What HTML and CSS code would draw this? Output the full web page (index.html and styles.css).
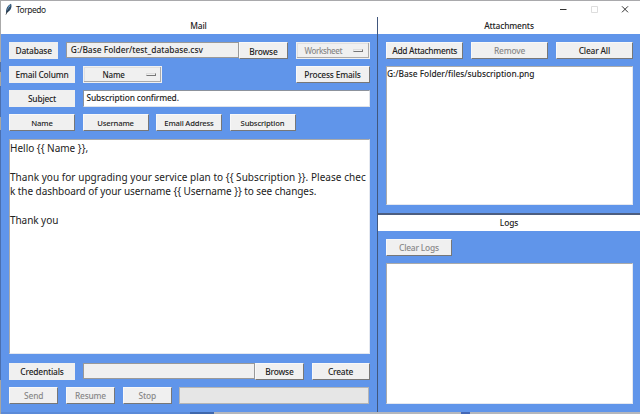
FILE: index.html
```html
<!DOCTYPE html>
<html lang="en">
  <head>
    <meta charset="UTF-8" />
    <meta name="viewport" content="width=device-width, initial-scale=1.0" />
    <title>Torpedo</title>
    <link rel="stylesheet" href="styles.css" />
  </head>
  <body>
    <div class="window">
      <header class="titlebar">
        <svg class="feather" viewBox="0 0 8 12">
          <path d="M1.3 10.6C.6 7.5 1.5 3 6 .8 7.2 3.4 6.3 7.4 2.4 9.2Z" fill="#2b4a68" />
          <path d="M2.2 8C2.3 5.2 3.4 3 5.6 1.4 5 4.2 4.1 6.2 2.2 8Z" fill="#6fa3cf" />
          <path d="M.9 11.6 2.6 8.2 4.6 4" fill="none" stroke="#222" stroke-width=".7" />
        </svg>
        <span class="title">Torpedo</span>
        <svg class="controls" viewBox="0 0 70 10">
          <path d="M0 5.5H6.5" stroke="#333" />
          <path d="M31.5 2.5H37.5V8.5H31.5Z" fill="none" stroke="#ddd" />
          <path d="M62 2.3 68 8.3M68 2.3 62 8.3" stroke="#333" />
        </svg>
      </header>

      <div class="panes">
        <section class="pane mail">
          <h2 class="heading">Mail</h2>
          <div class="content">
            <div class="row">
              <span class="label small">Database</span>
              <div class="picker">
                <div class="entry readonly">G:/Base Folder/test_database.csv</div>
                <button class="btn small browse">Browse</button>
              </div>
              <button class="btn menu worksheet" disabled>Worksheet<i class="notch"></i></button>
            </div>
            <div class="row">
              <span class="label">Email Column</span>
              <button class="btn menu column">Name<i class="notch"></i></button>
              <button class="btn process">Process Emails</button>
            </div>
            <div class="row">
              <span class="label">Subject</span>
              <div class="entry subject">Subscription confirmed.</div>
            </div>
            <div class="row fields">
              <button class="btn">Name</button>
              <button class="btn">Username</button>
              <button class="btn">Email Address</button>
              <button class="btn">Subscription</button>
            </div>
            <div class="message">Hello {{ Name }},

<span class="long">Thank you for upgrading your service plan to {{ Subscription }}. Please chec</span>
<span class="tight">k the dashboard of your username {{ Username }} to see changes.</span>

<span class="tight">Thank you</span></div>
            <div class="row credentials">
              <span class="label">Credentials</span>
              <div class="picker">
                <div class="entry readonly"></div>
                <button class="btn small">Browse</button>
              </div>
              <button class="btn create">Create</button>
            </div>
            <div class="row">
              <button class="btn small" disabled>Send</button>
              <button class="btn small" disabled>Resume</button>
              <button class="btn small" disabled>Stop</button>
              <div class="progress"></div>
            </div>
          </div>
        </section>

        <div class="side">
          <section class="pane attachments">
            <h2 class="heading">Attachments</h2>
            <div class="content">
              <div class="row">
                <button class="btn wide add">Add Attachments</button>
                <button class="btn wide" disabled>Remove</button>
                <button class="btn wide">Clear All</button>
              </div>
              <div class="list">G:/Base Folder/files/subscription.png</div>
            </div>
          </section>
          <section class="pane logs">
            <h2 class="heading">Logs</h2>
            <div class="content">
              <div class="row">
                <button class="btn" disabled>Clear Logs</button>
              </div>
              <div class="list"></div>
            </div>
          </section>
        </div>
      </div>
    </div>
    <div class="desktop"></div>
  </body>
</html>
```
FILE: styles.css
```css
* {
  box-sizing: border-box;
}

body {
  margin: 0;
  height: 414px;
  padding-left: 1px;
  overflow: hidden;
  background: linear-gradient(#aaa 0 62px, #5272a8 62px 72px, #a9a69f 72px 86px, #4b6fae 86px 117px, #a9a69f 117px 130px, #4b6fae 130px 380px, #a9a69f 380px);
  font-family: "Noto Sans", "Open Sans", sans-serif;
  font-size: 8.4px;
  font-weight: 500;
  color: #222;
}

.window {
  display: flex;
  flex-direction: column;
  height: 412px;
  border-top: 1px solid #a9a9ac;
  background: #fff;
}

.titlebar {
  display: flex;
  align-items: center;
  height: 16px;
  padding-left: 4px;
}

.feather {
  width: 8px;
  height: 12px;
}

.title {
  margin-left: 3px;
  font-size: 8.4px;
  font-weight: 400;
  letter-spacing: -0.45px;
}

.controls {
  width: 70px;
  height: 10px;
  margin: 0 10px 0 auto;
}

.panes {
  display: flex;
  flex: 1;
}

.mail {
  width: 376px;
}

.side {
  display: flex;
  flex: 1;
  flex-direction: column;
  border-left: 1px solid #41577d;
}

.pane {
  display: flex;
  flex-direction: column;
}

.heading {
  height: 17px;
  margin: 0;
  font-size: 8.4px;
  font-weight: 500;
  line-height: 18px;
  letter-spacing: -0.15px;
  text-align: center;
}

.mail .heading {
  padding-left: 19px;
}

.attachments {
  height: 196px;
}

.logs {
  flex: 1;
  border-top: 2px solid #4c5e80;
}

.logs .heading {
  height: 16px;
  line-height: 16px;
}

.content {
  display: flex;
  flex: 1;
  flex-direction: column;
  gap: 7.3px;
  padding: 7.5px 7px 8px 8px;
  background: #6095ea;
}

.mail .content {
  padding-right: 7.5px;
}

.row {
  display: flex;
  gap: 7.5px;
  height: 17px;
  flex: none;
}

.label,
.btn {
  display: flex;
  align-items: center;
  justify-content: center;
  width: 66px;
  margin: 0;
  padding: 0;
  border: 0;
  background: #f0f0f0;
  color: #222;
  font: inherit;
  letter-spacing: -0.18px;
  white-space: nowrap;
}

.btn {
  border: 1px solid;
  border-color: #f8f8f8 #777 #777 #f8f8f8;
}

.btn:disabled {
  color: #888;
}

.small {
  width: 49.3px;
}

.browse {
  padding-top: 2px;
}

/* option menus: raised box with a small bevelled bar */
.menu {
  justify-content: space-between;
  border-width: 1.5px;
  box-shadow: inset -1px -1px #aaa, inset 1px 1px #e0e0e0;
  outline: 1px solid #f0f0f0;
  outline-offset: -1px;
}

.notch {
  width: 10px;
  height: 3px;
  border: 1px solid;
  border-color: #ddd #777 #777 #ddd;
}

.worksheet {
  width: 74px;
  padding: 0 6px 0 8px;
  font-size: 8px;
  letter-spacing: -0.4px;
}

.column {
  width: 79px;
  padding: 0 5px 0 19px;
  font-size: 8px;
}

.process {
  width: 74px;
  margin-left: auto;
}

.picker {
  display: flex;
  flex: 1;
}

.entry {
  display: flex;
  flex: 1;
  align-items: center;
  padding-left: 4px;
  border: 1px solid;
  border-color: #8c929c #dfe3ea #dfe3ea #8c929c;
  background: #fff;
}

.subject {
  padding-left: 3px;
  padding-bottom: 2px;
  letter-spacing: -0.15px;
}

.readonly {
  height: 16px;
  border-color: #999;
  background: #f0f0f0;
}

.fields .btn {
  font-size: 7.7px;
}

.message,
.list {
  flex: 1;
  border: 1px solid;
  border-color: #aaa #e4e8f0 #e4e8f0 #aaa;
  background: #fff;
  white-space: pre;
}

.message {
  padding: 1px 0 0;
  font-size: 10px;
  font-weight: 400;
  line-height: 14.45px;
}

.message .long {
  letter-spacing: 0.04px;
}

.message .tight {
  letter-spacing: -0.06px;
}

.list {
  line-height: 14px;
  letter-spacing: -0.03px;
}

.credentials {
  margin-top: 1px;
}

.create {
  width: 58px;
}

.progress {
  flex: 1;
  margin-right: 1px;
  border: 1px solid #b5b5b5;
  background: #e6e6e6;
}

.wide {
  flex: 1;
}

.add {
  letter-spacing: -0.3px;
}

.desktop {
  height: 2px;
  background: linear-gradient(90deg, #5b8ad8 0 189px, #3f68ac 189px 213px, #b5b7bc 213px 460px, #4568b5 460px 469px, #b5b7bc 469px);
}
```
